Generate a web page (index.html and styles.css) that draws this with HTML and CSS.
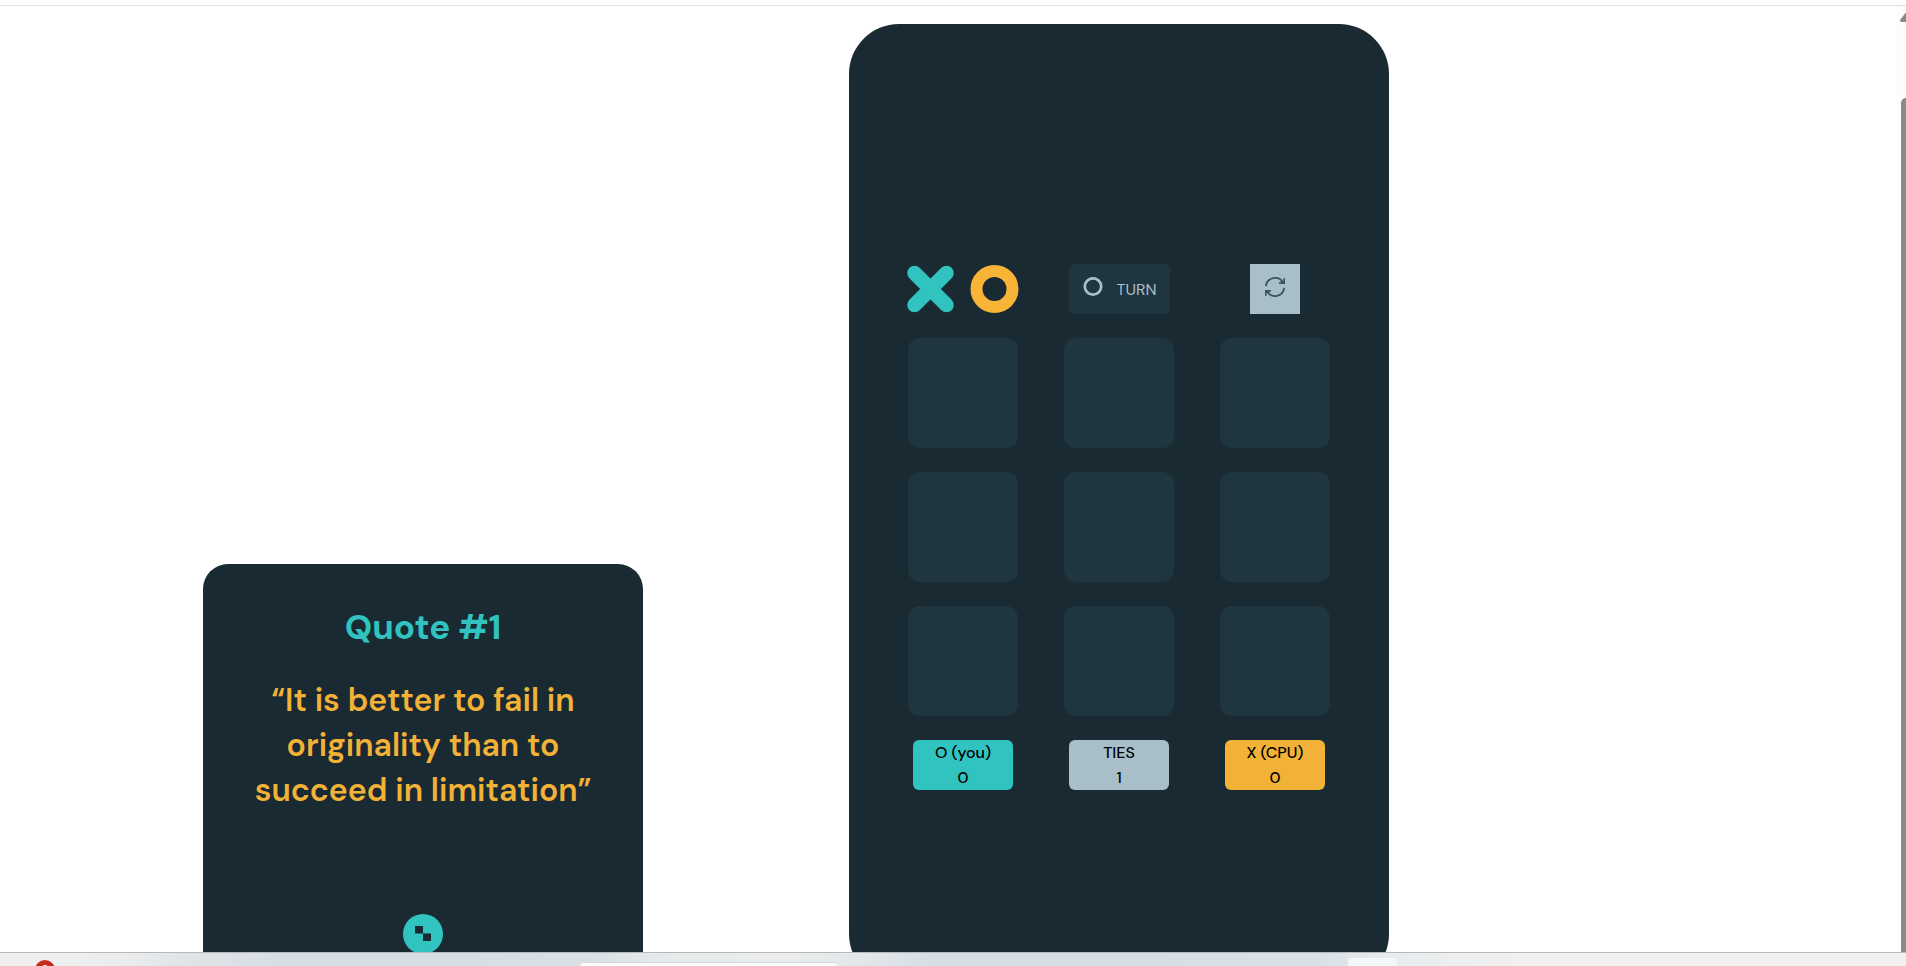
FILE: index.html
```html
<!DOCTYPE html>
<html lang="en">
<head>
<meta charset="utf-8">
<meta name="viewport" content="width=device-width, initial-scale=1">
<title>Tic Tac Toe</title>
<link rel="stylesheet" href="styles.css">
</head>
<body>
<main class="page">
  <section class="quote">
    <h1 class="quote-title">Quote #1</h1>
    <p class="quote-text">“It is better to fail in originality than to succeed in limitation”</p>
    <button class="dice" type="button" aria-label="New quote">
      <svg width="16" height="16" viewBox="0 0 16 16"><path d="M0 0h8v8H0zM8 8h8v7H8z" fill="#1a2a33"/><path d="M0 7.500h16" stroke="#2a6f76" stroke-width="1"/></svg>
    </button>
  </section>
  <section class="game">
    <div class="board">
      <svg class="logo" viewBox="0 0 112 50" role="img" aria-label="XO">
        <path d="M7.500 9 39.500 41M39.500 9 7.500 41" stroke="#31c3bf" stroke-width="14.500" stroke-linecap="round"/>
        <circle cx="87.500" cy="25" r="18" fill="none" stroke="#f8b436" stroke-width="12"/>
      </svg>
      <div class="turn">
        <svg width="20" height="20" viewBox="0 0 20 20"><circle cx="10" cy="9.500" r="8" fill="none" stroke="#15222a" stroke-opacity=".4" stroke-width="4"/><circle cx="10" cy="9.500" r="8.200" fill="none" stroke="#a8bfc9" stroke-width="2.800"/></svg>
        <span>TURN</span>
      </div>
      <button class="reset" type="button" aria-label="Restart">
        <svg width="20" height="20" viewBox="0 0 20 20" fill="none" stroke="#3c525e" stroke-width="1.800"><path d="M.9 9.200A9.200 9.200 0 0 1 18 5.600M19.100 10.800A9.200 9.200 0 0 1 2 14.400"/><path d="M19.200 1.300V6.200H14M.8 18.700V13.800H6"/><path d="M16 3.800 18.500 6M4 16.200 1.500 14"/></svg>
      </button>
      <button class="cell" type="button" aria-label="Cell 1"></button>
      <button class="cell" type="button" aria-label="Cell 2"></button>
      <button class="cell" type="button" aria-label="Cell 3"></button>
      <button class="cell" type="button" aria-label="Cell 4"></button>
      <button class="cell" type="button" aria-label="Cell 5"></button>
      <button class="cell" type="button" aria-label="Cell 6"></button>
      <button class="cell" type="button" aria-label="Cell 7"></button>
      <button class="cell" type="button" aria-label="Cell 8"></button>
      <button class="cell" type="button" aria-label="Cell 9"></button>
      <div class="score score-o"><span>O (you)</span><span>0</span></div>
      <div class="score score-ties"><span>TIES</span><span>1</span></div>
      <div class="score score-x"><span>X (CPU)</span><span>0</span></div>
    </div>
  </section>
</main>
<div class="scrollbar">
  <svg width="6" height="10" viewBox="0 0 6 10"><path d="M0 8 5 1.500Q5.500 1 6 .8V10H1Q0 9.500 0 8Z" fill="#8a8a8a"/></svg>
  <div class="thumb"></div>
</div>
<footer class="taskbar">
  <svg class="badge" width="20" height="6" viewBox="0 0 20 6"><circle cx="10" cy="10" r="10" fill="#c42b1c"/><path d="M7.500 6q2.500-2 5 0Z" fill="#fff"/></svg>
  <div class="search"></div>
  <div class="app"></div>
</footer>
</body>
</html>
```
FILE: styles.css
```css
* {
  box-sizing: border-box;
}

body {
  margin: 0;
  height: 100vh;
  overflow: hidden;
  background: #fff;
  border-top: 1px solid #fff;
  font-family: "DM Sans", Inter, sans-serif;
  font-size: 16px;
}

body::before {
  content: "";
  display: block;
  margin-top: 4px;
  height: 1px;
  background: #e0e0e0;
}

button {
  border: 0;
  padding: 0;
  font: inherit;
  cursor: pointer;
}

svg {
  display: block;
}

.page {
  display: grid;
  grid-template-columns: 203fr 440px 206fr 540px 508fr;
  align-items: end;
  padding: 18px 9px 0 0;
}

.quote {
  grid-column: 2;
  display: flex;
  flex-direction: column;
  align-items: center;
  min-height: 420px;
  padding: 38px 50px 30px;
  border-radius: 25px;
  background: #1a2a33;
  text-align: center;
}

.quote-title {
  margin: 0;
  color: #31c3bf;
  font-size: 35px;
  font-weight: 700;
  line-height: 50px;
}

.quote-text {
  margin: 26px 0 0;
  color: #f2b137;
  font-size: 32px;
  font-weight: 600;
  line-height: 45px;
}

.dice {
  display: grid;
  place-items: center;
  width: 40px;
  height: 40px;
  margin-top: auto;
  border-radius: 50%;
  background: #31c3bf;
}

.game {
  grid-column: 4;
  min-height: 960px;
  padding: 240px 36px 0;
  border-radius: 50px;
  background: #1a2a33;
}

.board {
  display: grid;
  grid-template-columns: repeat(3, 1fr);
  justify-items: center;
  gap: 24px 0;
}

.logo {
  width: 112px;
  height: 50px;
}

.turn {
  display: flex;
  gap: 14px;
  width: 101px;
  height: 50px;
  padding: 13px 0 0 14px;
  border-radius: 5px;
  background: #1f3540;
  color: #a8bfc9;
  line-height: 25px;
}

.reset {
  display: grid;
  justify-items: center;
  align-content: start;
  width: 50px;
  height: 50px;
  padding-top: 13px;
  background: #a8bfc9;
}

.cell {
  width: 110px;
  height: 110px;
  border-radius: 12px;
  background: #1f3540;
}

.score {
  display: flex;
  flex-direction: column;
  align-items: center;
  width: 100px;
  height: 50px;
  border-radius: 6px;
  color: #000;
  font-weight: 500;
  line-height: 25px;
}

.score-o {
  background: #31c3bf;
}

.score-ties {
  background: #a8bfc9;
}

.score-x {
  background: #f2b137;
}

.scrollbar {
  position: fixed;
  top: 6px;
  right: 0;
  bottom: 14px;
  display: flex;
  flex-direction: column;
  align-items: flex-end;
  width: 9px;
  padding-top: 6px;
  background: #fcfcfc;
}

.thumb {
  flex: 1;
  width: 5px;
  margin-top: 76px;
  border-radius: 5px 0 0 0;
  background: #8a8a8a;
}

.taskbar {
  position: fixed;
  right: 0;
  bottom: 0;
  left: 0;
  display: grid;
  grid-template-columns: 35fr 20px 525fr 258px 510fr 49px 509fr;
  align-items: end;
  height: 14px;
  border-top: 1px solid #b8b8b8;
  background: linear-gradient(90deg, #f0f0f0 0, #ecedee 6%, #dde2e6 11%, #d6dee6 15%, #d8e0e6 31%, #e6eaeb 35%, #eceeed 41%, #e2e7e9 45%, #d6dee6 49%, #d8e0e6 69%, #e8ecee 73%, #f0f0f0 79%);
}

.badge {
  grid-column: 2;
}

.search {
  grid-column: 4;
  height: 4px;
  border-top: 1px solid #d0d6da;
  border-radius: 16px 16px 0 0;
  background: #fafbfb;
}

.app {
  grid-column: 6;
  height: 8px;
  border-radius: 4px 4px 0 0;
  background: #f4f7f7;
}
```
